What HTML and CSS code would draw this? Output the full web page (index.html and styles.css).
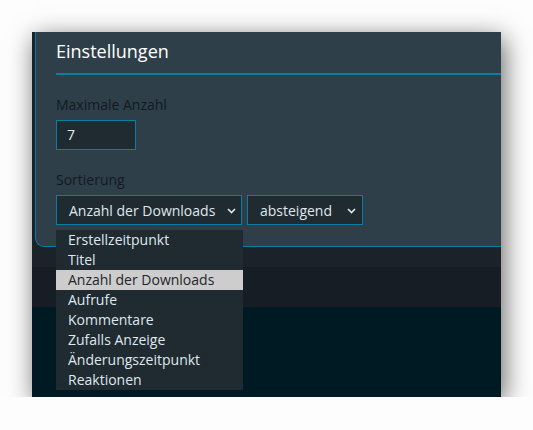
FILE: index.html
```html
<!DOCTYPE html>
<html lang="de">
  <head>
    <meta charset="UTF-8" />
    <meta name="viewport" content="width=device-width, initial-scale=1.0" />
    <title>Einstellungen</title>
    <link rel="stylesheet" href="styles.css">
  </head>
  <body>
    <div class="ventana">
      <!-- Panel de ajustes -->
      <div class="panel">
        <div class="tarjeta">
          <h2>Einstellungen</h2>

          <div class="form-group">
            <label for="maxAnzahl">Maximale Anzahl</label>
            <div class="campo" id="maxAnzahl">7</div>
          </div>

          <div class="form-group">
            <label>Sortierung</label>
            <div class="fila-select">
              <div class="select-wrap">
                <div class="select ancho">
                  <span>Anzahl der Downloads</span>
                  <svg class="chevron" width="9" height="6" viewBox="0 0 9 6">
                    <path d="M1 1l3.5 3.5L8 1" fill="none" stroke="#dfe7ec" stroke-width="1.6" />
                  </svg>
                </div>
                <!-- Lista desplegada -->
                <ul class="opciones">
                  <li>Erstellzeitpunkt</li>
                  <li>Titel</li>
                  <li class="activo">Anzahl der Downloads</li>
                  <li>Aufrufe</li>
                  <li>Kommentare</li>
                  <li>Zufalls Anzeige</li>
                  <li>Änderungszeitpunkt</li>
                  <li>Reaktionen</li>
                </ul>
              </div>
              <div class="select corto">
                <span>absteigend</span>
                <svg class="chevron" width="9" height="6" viewBox="0 0 9 6">
                  <path d="M1 1l3.5 3.5L8 1" fill="none" stroke="#dfe7ec" stroke-width="1.6" />
                </svg>
              </div>
            </div>
          </div>
        </div>
      </div>

      <div class="franja"></div>
    </div>
  </body>
</html>
```

FILE: styles.css
```css
/* Fondo de la página */
body {
  margin: 0;
  background: #fdfdfd;
  font-family: 'Open Sans', 'Liberation Sans', sans-serif;
}

/* Ventana con sombra */
.ventana {
  width: 469px;
  height: 365px;
  margin: 32px 0 0 32px;
  background: #001a23;
  overflow: hidden;
  box-shadow: 3px 6px 24px rgba(0, 0, 0, 0.6);
}

.panel {
  background: #1b2229;
  padding: 0 0 20px 3px;
}

.tarjeta {
  background: #2f3f4a;
  border-left: 1px solid #0a7ea4;
  border-bottom: 1px solid #0a7ea4;
  border-bottom-left-radius: 9px;
  padding: 0 0 21px 20px;
}

h2 {
  margin: 0;
  padding: 7px 0 10px;
  font-size: 18px;
  line-height: 24px;
  font-weight: normal;
  color: #fff;
  border-bottom: 2px solid #0a7ea4;
}

.form-group {
  margin-top: 20px;
}

label {
  display: block;
  font-size: 14px;
  line-height: 20px;
  color: #121a1f;
  margin-bottom: 5px;
}

.campo {
  width: 80px;
  height: 30px;
  box-sizing: border-box;
  border: 1px solid #0a7ea4;
  background: #1f2a31;
  color: #e4ecf0;
  font-size: 14px;
  line-height: 28px;
  padding-left: 10px;
}

/* Selects */
.fila-select {
  display: flex;
  gap: 5px;
}

.select-wrap {
  position: relative;
}

.select {
  display: flex;
  align-items: center;
  justify-content: space-between;
  height: 30px;
  box-sizing: border-box;
  border: 1px solid #0a7ea4;
  background: #1f2a31;
  color: #dfe7ec;
  font-size: 14px;
  padding: 0 5px 0 12px;
}

.select.ancho {
  width: 186px;
}

.select.corto {
  width: 116px;
  padding-right: 6px;
}

.chevron {
  display: block;
  margin-top: 1px;
}

.opciones {
  position: absolute;
  top: calc(100% + 5px);
  left: 0;
  width: 187px;
  margin: 0;
  padding: 0;
  list-style: none;
  background: #1f2a31;
  z-index: 2;
}

.opciones li {
  height: 20px;
  line-height: 20px;
  font-size: 14px;
  padding-left: 12px;
  color: #dfe7ec;
}

.opciones li.activo {
  background: #cdcdcd;
  color: #1e262b;
}

.franja {
  height: 40px;
  background: #161d25;
}
```
